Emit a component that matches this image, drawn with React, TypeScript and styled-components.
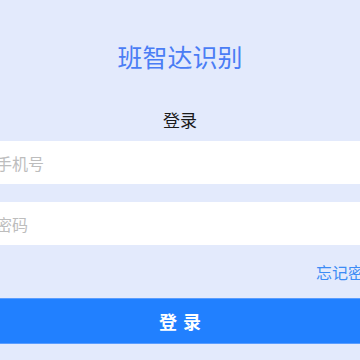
import React from 'react'
import styled, { createGlobalStyle } from 'styled-components'

const GlobalStyle = createGlobalStyle`
	html, body {
		margin: 0;
		padding: 0;
		background: #e3eafc;
		overflow: hidden;
	}
	body {
		font-family: 'Noto Sans CJK SC', 'Noto Sans', sans-serif;
	}
`

const Page = styled.div`
	min-height: 100vh;
	padding-top: 40px;
	box-sizing: border-box;
`

const Title = styled.h1`
	margin: 0;
	font-size: 25px;
	line-height: 32px;
	font-weight: 400;
	color: #4a7df5;
	text-align: center;
`

// form is wider than the 360 window, so it spills over both sides
const Form = styled.form`
	margin: 36px -20px 0;
	display: flex;
	flex-direction: column;
`

const Heading = styled.div`
	font-size: 17px;
	line-height: 24px;
	color: #1a1a1a;
	text-align: center;
	margin-bottom: 9px;
`

const Field = styled.input`
	height: 43px;
	border: none;
	outline: none;
	background: #fff;
	padding: 0 16px;
	font-family: inherit;
	font-size: 16px;
	color: #333;
	box-sizing: border-box;
	width: 100%;

	& + & {
		margin-top: 18px;
	}

	&::placeholder {
		color: #bdbdbd;
	}
`

const Forgot = styled.a`
	align-self: flex-end;
	margin-top: 16px;
	font-size: 16px;
	line-height: 22px;
	color: #3d8cf5;
	text-decoration: none;
	cursor: pointer;
`

const Submit = styled.button`
	margin-top: 15px;
	height: 46px;
	border: 1px solid #5a9dff;
	border-left: none;
	border-right: none;
	background: #2180ff;
	color: #fff;
	font-family: inherit;
	font-size: 18px;
	font-weight: 700;
	letter-spacing: 6px;
	text-indent: 6px;
	cursor: pointer;
`

const App = () => {
	return (
		<Page>
			<GlobalStyle />
			<Title>班智达识别</Title>
			<Form onSubmit={(e) => e.preventDefault()}>
				<Heading>登录</Heading>
				<Field type='tel' placeholder='手机号' />
				<Field type='password' placeholder='密码' />
				<Forgot>忘记密码</Forgot>
				<Submit type='submit'>登录</Submit>
			</Form>
		</Page>
	)
}

export default App
